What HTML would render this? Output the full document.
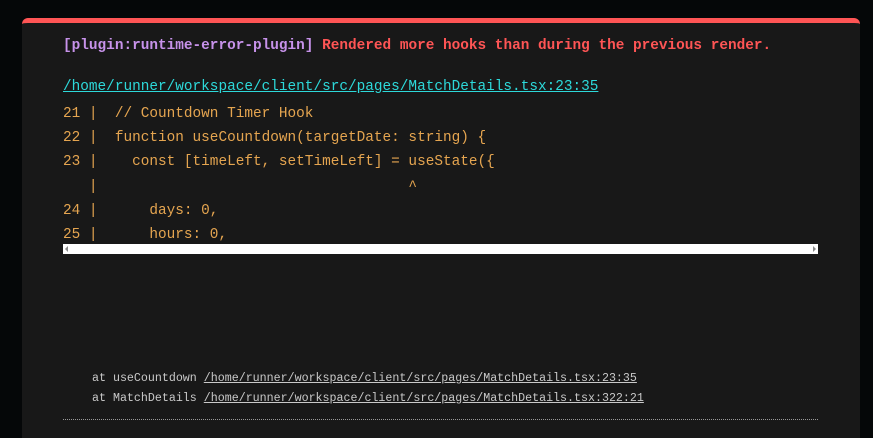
<!DOCTYPE html>
<html><head><style>
html,body{margin:0;padding:0;width:873px;height:428px;overflow:hidden;background:#050708;}
.panel{position:absolute;left:22px;top:18px;width:838px;height:420px;background:#181818;border-top:5px solid #ff5555;border-radius:6px 6px 0 0;box-sizing:border-box;}
.m{font-family:"Liberation Mono",monospace;font-size:14.4px;white-space:pre;position:absolute;left:41px;}
.t{top:15px;font-weight:bold;}
.p{color:#c792ea}.r{color:#ff5555}
.f{top:56px;color:#2dd9da;text-decoration:underline;}
.c{top:79px;color:#e5a550;line-height:24.2px;}
.sb{position:absolute;left:41px;top:221px;width:755px;height:10px;background:#fff;}
.sb:before{content:"";position:absolute;left:2px;top:2px;border:3px solid transparent;border-right:3px solid #888;border-left:0;}
.sb:after{content:"";position:absolute;right:2px;top:2px;border:3px solid transparent;border-left:3px solid #888;border-right:0;}
.s{font-size:11.65px;color:#c9c9c9;top:346px;left:70px;line-height:19.5px;}
.s u{color:#c9c9c9}
.d{position:absolute;left:41px;top:396px;width:755px;border-top:1px dotted #999;}
</style></head><body>
<div class="panel">
<div class="m t"><span class="p">[plugin:runtime-error-plugin]</span> <span class="r">Rendered more hooks than during the previous render.</span></div>
<div class="m f">/home/runner/workspace/client/src/pages/MatchDetails.tsx:23:35</div>
<div class="m c">21 |  // Countdown Timer Hook
22 |  function useCountdown(targetDate: string) {
23 |    const [timeLeft, setTimeLeft] = useState({
   |                                    ^
24 |      days: 0,
25 |      hours: 0,</div>
<div class="sb"></div>
<div class="m s">at useCountdown <u>/home/runner/workspace/client/src/pages/MatchDetails.tsx:23:35</u>
at MatchDetails <u>/home/runner/workspace/client/src/pages/MatchDetails.tsx:322:21</u></div>
<div class="d"></div>
</div>
</body></html>
